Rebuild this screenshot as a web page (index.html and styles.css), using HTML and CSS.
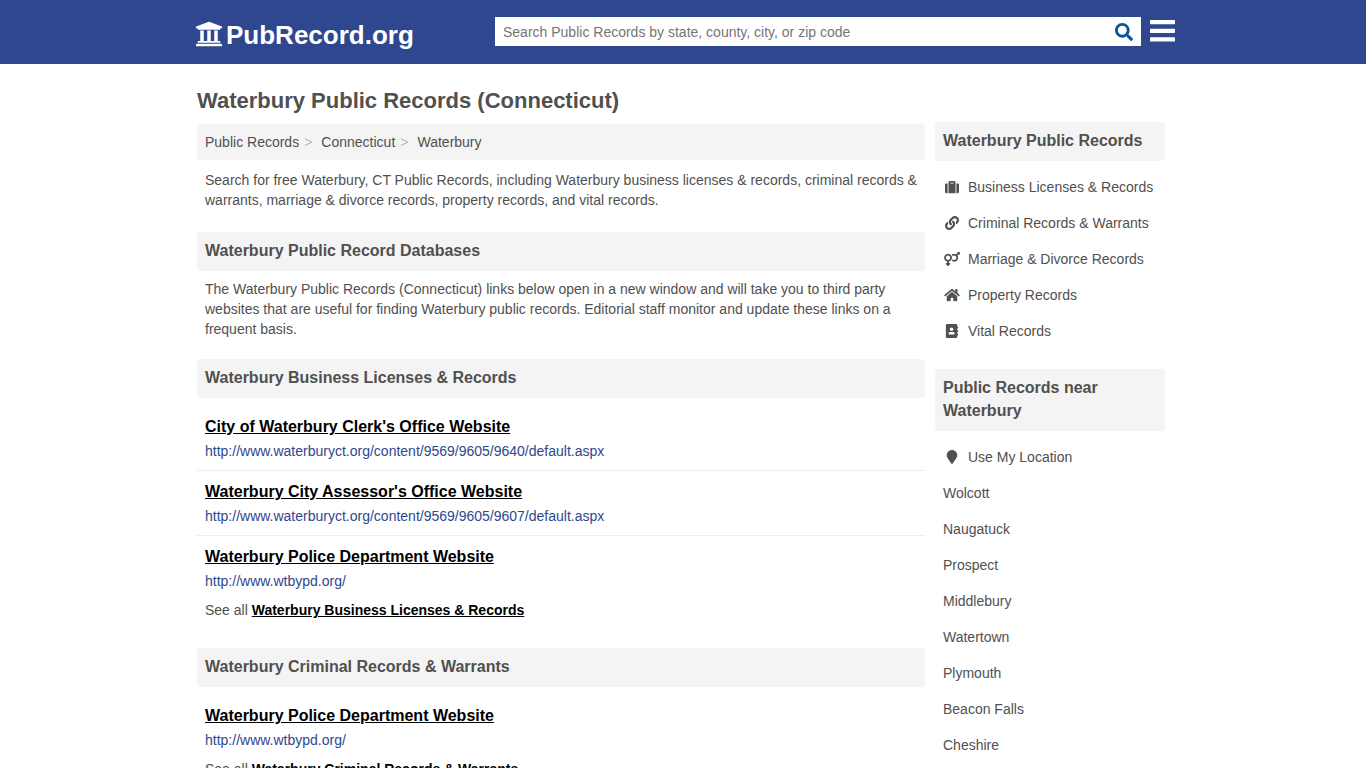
FILE: index.html
```html
<!DOCTYPE html>
<html lang="en">
<head>
<meta charset="utf-8">
<meta name="viewport" content="width=device-width, initial-scale=1">
<title>Waterbury Public Records (Connecticut)</title>
<link rel="stylesheet" href="styles.css">
</head>
<body>
<header class="site-header">
  <div class="header-inner">
    <a class="logo" href="#">
      <svg class="logo-icon" viewBox="0 0 512 512" aria-hidden="true"><path d="M496 128v16a8 8 0 0 1-8 8h-24v12c0 6.627-5.373 12-12 12H60c-6.627 0-12-5.373-12-12v-12H24a8 8 0 0 1-8-8v-16a8 8 0 0 1 4.941-7.392l232-88a7.996 7.996 0 0 1 6.118 0l232 88A8 8 0 0 1 496 128zm-24 304H40c-13.255 0-24 10.745-24 24v16a8 8 0 0 0 8 8h464a8 8 0 0 0 8-8v-16c0-13.255-10.745-24-24-24zM96 192v192H60c-6.627 0-12 5.373-12 12v20h416v-20c0-6.627-5.373-12-12-12h-36V192h-64v192h-64V192h-64v192h-64V192H96z"/></svg>
      <span>PubRecord.org</span>
    </a>
    <form class="search" role="search">
      <input class="search-input" type="text" aria-label="Search Public Records" placeholder="Search Public Records by state, county, city, or zip code">
      <button class="search-button" type="submit" aria-label="Search">
        <svg viewBox="0 0 512 512" aria-hidden="true"><path d="M505 442.700L405.300 343c-4.500-4.500-10.600-7-17-7H372c27.600-35.300 44-79.700 44-128C416 93.100 322.900 0 208 0S0 93.100 0 208s93.100 208 208 208c48.300 0 92.700-16.400 128-44v16.300c0 6.400 2.500 12.500 7 17l99.700 99.700c9.400 9.400 24.600 9.400 33.900 0l28.300-28.300c9.400-9.400 9.400-24.600.1-34zM208 336c-70.700 0-128-57.200-128-128 0-70.700 57.200-128 128-128 70.700 0 128 57.200 128 128 0 70.700-57.200 128-128 128z"/></svg>
      </button>
    </form>
    <button class="menu-button" type="button" aria-label="Menu">
      <svg viewBox="0 0 25 22" aria-hidden="true"><rect width="25" height="4.300" rx=".7"/><rect y="8.700" width="25" height="4.300" rx=".7"/><rect y="17.300" width="25" height="4.300" rx=".7"/></svg>
    </button>
  </div>
</header>

<div class="page">
  <h1 class="page-title">Waterbury Public Records (Connecticut)</h1>
  <div class="columns">
    <main class="content">
      <nav aria-label="Breadcrumb">
        <ol class="breadcrumb">
          <li><a href="#">Public Records</a></li>
          <li><a href="#">Connecticut</a></li>
          <li><a href="#">Waterbury</a></li>
        </ol>
      </nav>
      <p class="text intro">Search for free Waterbury, CT Public Records, including Waterbury business licenses &amp; records, criminal records &amp; warrants, marriage &amp; divorce records, property records, and vital records.</p>

      <h2 class="bar">Waterbury Public Record Databases</h2>
      <p class="text">The Waterbury Public Records (Connecticut) links below open in a new window and will take you to third party websites that are useful for finding Waterbury public records. Editorial staff monitor and update these links on a frequent basis.</p>

      <section class="group">
        <h2 class="bar">Waterbury Business Licenses &amp; Records</h2>
        <ul class="results">
          <li class="result"><a class="result-title" href="#">City of Waterbury Clerk's Office Website</a><span class="result-url">http://www.waterburyct.org/content/9569/9605/9640/default.aspx</span></li>
          <li class="result"><a class="result-title" href="#">Waterbury City Assessor's Office Website</a><span class="result-url">http://www.waterburyct.org/content/9569/9605/9607/default.aspx</span></li>
          <li class="result"><a class="result-title" href="#">Waterbury Police Department Website</a><span class="result-url">http://www.wtbypd.org/</span></li>
        </ul>
        <p class="see-all">See all <a href="#">Waterbury Business Licenses &amp; Records</a></p>
      </section>

      <section class="group">
        <h2 class="bar">Waterbury Criminal Records &amp; Warrants</h2>
        <ul class="results">
          <li class="result"><a class="result-title" href="#">Waterbury Police Department Website</a><span class="result-url">http://www.wtbypd.org/</span></li>
        </ul>
        <p class="see-all">See all <a href="#">Waterbury Criminal Records &amp; Warrants</a></p>
      </section>
    </main>

    <aside class="sidebar">
      <h2 class="bar">Waterbury Public Records</h2>
      <ul class="side-list">
        <li><a href="#"><svg class="side-icon" viewBox="0 0 512 512" aria-hidden="true"><path d="M128 480h256V80c0-26.500-21.500-48-48-48H176c-26.500 0-48 21.500-48 48v400zm64-384h128v32H192V96zm320 80v256c0 26.500-21.500 48-48 48h-48V128h48c26.500 0 48 21.500 48 48zM96 480H48c-26.500 0-48-21.500-48-48V176c0-26.500 21.500-48 48-48h48v352z"/></svg>Business Licenses &amp; Records</a></li>
        <li><a href="#"><svg class="side-icon" viewBox="0 0 512 512" aria-hidden="true"><path d="M326.612 185.391c59.747 59.809 58.927 155.698.36 214.590-.11.120-.24.250-.36.370l-67.200 67.200c-59.270 59.270-155.699 59.262-214.960 0-59.270-59.260-59.270-155.700 0-214.960l37.106-37.106c9.840-9.840 26.786-3.300 27.294 10.606.648 17.722 3.826 35.527 9.690 52.721 1.986 5.822.567 12.262-3.783 16.612l-13.087 13.087c-28.026 28.026-28.905 73.660-1.155 101.960 28.024 28.579 74.086 28.749 102.325.510l67.200-67.190c28.191-28.191 28.073-73.757 0-101.830-3.701-3.694-7.429-6.564-10.341-8.569a16.037 16.037 0 0 1-6.947-12.606c-.396-10.567 3.348-21.456 11.698-29.806l21.054-21.055c5.521-5.521 14.182-6.199 20.584-1.731a152.482 152.482 0 0 1 20.522 17.197zM467.547 44.449c-59.261-59.262-155.690-59.270-214.960 0l-67.200 67.200c-.120.120-.250.250-.360.370-58.566 58.892-59.387 154.781.360 214.590a152.454 152.454 0 0 0 20.521 17.196c6.402 4.468 15.064 3.789 20.584-1.731l21.054-21.055c8.350-8.350 12.094-19.239 11.698-29.806a16.037 16.037 0 0 0-6.947-12.606c-2.912-2.005-6.640-4.875-10.341-8.569-28.073-28.073-28.191-73.639 0-101.830l67.200-67.190c28.239-28.239 74.300-28.069 102.325.510 27.750 28.300 26.872 73.934-1.155 101.960l-13.087 13.087c-4.350 4.350-5.769 10.790-3.783 16.612 5.864 17.194 9.042 34.999 9.690 52.721.509 13.906 17.454 20.446 27.294 10.606l37.106-37.106c59.271-59.259 59.271-155.699.001-214.959z"/></svg>Criminal Records &amp; Warrants</a></li>
        <li><a href="#"><svg class="side-icon" viewBox="0 0 576 512" aria-hidden="true"><path d="M564 0h-79c-10.700 0-16 12.900-8.500 20.500l16.900 16.900-48.700 48.700C422.500 72.100 396.200 64 368 64c-33.700 0-64.600 11.600-89.200 30.900 14 16.700 25 36 32.100 57.100 14.500-14.800 34.700-24 57.100-24 44.100 0 80 35.900 80 80s-35.900 80-80 80c-22.300 0-42.600-9.200-57.100-24-7.100 21.100-18 40.400-32.100 57.100 24.500 19.400 55.500 30.900 89.200 30.900 79.500 0 144-64.500 144-144 0-28.200-8.100-54.500-22.100-76.700l48.700-48.700 16.900 16.900c2.400 2.400 5.400 3.500 8.400 3.500 6.200 0 12.100-4.800 12.100-12V12c0-6.600-5.400-12-12-12zM144 64C64.500 64 0 128.500 0 208c0 68.500 47.900 125.900 112 140.400V400H76c-6.600 0-12 5.400-12 12v40c0 6.600 5.400 12 12 12h36v36c0 6.600 5.400 12 12 12h40c6.600 0 12-5.400 12-12v-36h36c6.600 0 12-5.400 12-12v-40c0-6.600-5.400-12-12-12h-36v-51.600c64.100-14.600 112-71.900 112-140.400 0-79.500-64.500-144-144-144zm0 224c-44.100 0-80-35.900-80-80s35.900-80 80-80 80 35.900 80 80-35.900 80-80 80z"/></svg>Marriage &amp; Divorce Records</a></li>
        <li><a href="#"><svg class="side-icon" viewBox="0 0 576 512" aria-hidden="true"><path d="M280.370 148.260L96 300.110V464a16 16 0 0 0 16 16l112.060-.290a16 16 0 0 0 15.920-16V368a16 16 0 0 1 16-16h64a16 16 0 0 1 16 16v95.640a16 16 0 0 0 16 16.050L464 480a16 16 0 0 0 16-16V300L295.670 148.260a12.190 12.190 0 0 0-15.300 0zM571.600 251.470L488 182.560V44.050a12 12 0 0 0-12-12h-56a12 12 0 0 0-12 12v72.610L318.470 43a48 48 0 0 0-61 0L4.340 251.470a12 12 0 0 0-1.600 16.900l25.500 31A12 12 0 0 0 45.150 301l235.220-193.740a12.190 12.190 0 0 1 15.300 0L530.900 301a12 12 0 0 0 16.900-1.600l25.500-31a12 12 0 0 0-1.700-16.930z"/></svg>Property Records</a></li>
        <li><a href="#"><svg class="side-icon" viewBox="0 0 448 512" aria-hidden="true"><path d="M436 160c6.600 0 12-5.400 12-12v-40c0-6.600-5.400-12-12-12h-20V48c0-26.500-21.500-48-48-48H48C21.500 0 0 21.500 0 48v416c0 26.500 21.500 48 48 48h320c26.500 0 48-21.500 48-48v-48h20c6.600 0 12-5.400 12-12v-40c0-6.600-5.400-12-12-12h-20v-64h20c6.600 0 12-5.400 12-12v-40c0-6.600-5.400-12-12-12h-20v-64h20zm-228-32c35.300 0 64 28.700 64 64s-28.700 64-64 64-64-28.700-64-64 28.700-64 64-64zm112 236.800c0 10.600-10 19.200-22.400 19.200H118.400C106 384 96 375.400 96 364.800v-19.200c0-31.800 30.100-57.600 67.200-57.600h5c12.300 5.100 25.700 8 39.800 8s27.600-2.900 39.800-8h5c37.100 0 67.200 25.800 67.200 57.600v19.200z"/></svg>Vital Records</a></li>
      </ul>

      <h2 class="bar">Public Records near Waterbury</h2>
      <ul class="side-list">
        <li><a href="#"><svg class="side-icon" viewBox="0 0 384 512" aria-hidden="true"><path d="M172.268 501.670C26.970 291.031 0 269.413 0 192 0 85.961 85.961 0 192 0s192 85.961 192 192c0 77.413-26.970 99.031-172.268 309.670-9.535 13.774-29.930 13.773-39.464 0z"/></svg>Use My Location</a></li>
        <li><a href="#">Wolcott</a></li>
        <li><a href="#">Naugatuck</a></li>
        <li><a href="#">Prospect</a></li>
        <li><a href="#">Middlebury</a></li>
        <li><a href="#">Watertown</a></li>
        <li><a href="#">Plymouth</a></li>
        <li><a href="#">Beacon Falls</a></li>
        <li><a href="#">Cheshire</a></li>
      </ul>
    </aside>
  </div>
</div>
</body>
</html>
```
FILE: styles.css
```css
* {
  box-sizing: border-box;
}

body {
  margin: 0;
  background: #fff;
  color: #505050;
  font: 14px/20px "Liberation Sans", Arial, sans-serif;
}

a {
  color: inherit;
  text-decoration: none;
}

ul,
ol {
  margin: 0;
  padding: 0;
  list-style: none;
}

svg {
  display: block;
  fill: currentColor;
}

.site-header {
  background: #2e478f;
  color: #fff;
}

.header-inner {
  display: flex;
  align-items: flex-start;
  max-width: 984px;
  min-height: 64px;
  margin: 0 auto;
  padding: 17px 0 0 4px;
}

.logo {
  display: flex;
  flex: 0 0 300px;
  align-items: center;
  gap: 3px;
  font-size: 26px;
  font-weight: bold;
  line-height: 36px;
}

.logo-icon {
  width: 28px;
  height: 28px;
  margin-bottom: 3px;
}

.search {
  display: flex;
  flex: 1;
  height: 29px;
  background: #fff;
}

.search-input {
  flex: 1;
  min-width: 0;
  padding: 0 8px;
  border: 0;
  background: transparent;
  color: #505050;
  font: inherit;
}

.search-input::placeholder {
  color: #757575;
}

.search-button,
.menu-button {
  padding: 0;
  border: 0;
  background: transparent;
  cursor: pointer;
}

.search-button {
  padding: 0 8px;
  color: #0b559f;
}

.search-button svg {
  width: 18px;
  height: 18px;
}

.menu-button {
  margin: 3px 0 0 9px;
  color: #fff;
}

.menu-button svg {
  width: 25px;
  height: 22px;
}

.page {
  max-width: 972px;
  margin: 0 auto;
  padding-right: 4px;
}

.page-title {
  margin: 0;
  padding: 23px 0 7px;
  font-size: 22px;
  line-height: 28px;
}

.columns {
  display: flex;
  gap: 10px;
}

.content {
  flex: 1;
  min-width: 0;
  padding-top: 2px;
}

.sidebar {
  flex: 0 0 230px;
}

.breadcrumb {
  display: flex;
  margin: 0 0 10px;
  padding: 8px;
  border-radius: 4px;
  background: #f4f4f4;
}

.breadcrumb li + li::before {
  content: ">";
  padding: 0 9px 0 5px;
  color: #bbb;
}

.text {
  margin: 0 0 20px;
  padding: 0 8px;
}

.intro {
  margin-bottom: 22px;
}

.bar {
  margin: 0 0 8px;
  padding: 7px 8px 9px;
  border-radius: 4px;
  background: #f4f4f4;
  font-size: 16px;
  line-height: 23px;
}

.group {
  margin-bottom: 28px;
}

.result {
  display: flex;
  flex-direction: column;
  align-items: flex-start;
  gap: 2px;
  padding: 9px 8px;
  border-bottom: 1px solid #eee;
}

.result:last-child {
  border-bottom: 0;
}

.result-title {
  color: #000;
  font-size: 16px;
  font-weight: bold;
  line-height: 24px;
  text-decoration: underline;
}

.result-url {
  color: #2e478f;
}

.see-all {
  margin: 0;
  padding: 0 8px;
}

.see-all a {
  color: #000;
  font-weight: bold;
  text-decoration: underline;
}

.side-list {
  margin-bottom: 20px;
}

.side-list a {
  display: flex;
  align-items: center;
  padding: 8px;
}

.side-icon {
  width: 18px;
  height: 14px;
  margin-right: 7px;
}
```
